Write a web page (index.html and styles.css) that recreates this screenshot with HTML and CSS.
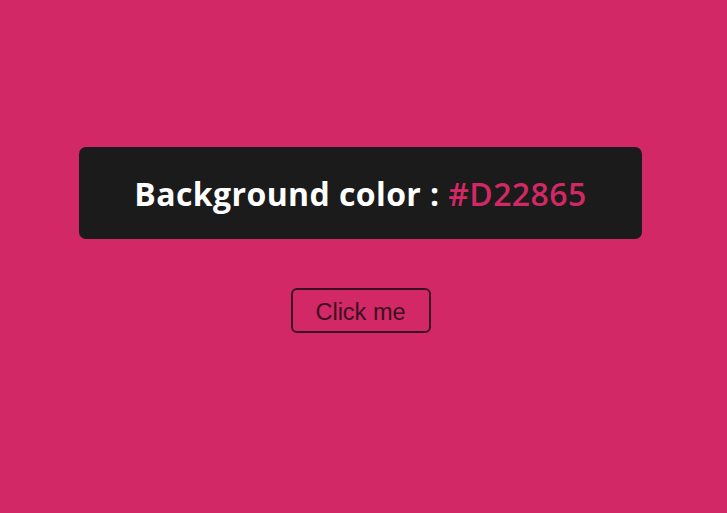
FILE: index.html
```html
<!DOCTYPE html>
<html>
<head>
<meta charset="utf-8">
<link rel="stylesheet" href="styles.css">
</head>
<body>
<main class="page">
  <div class="panel">
    <h1 class="title">Background color : <span class="code">#D22865</span></h1>
  </div>
  <button class="btn">Click me</button>
</main>
</body>
</html>
```
FILE: styles.css
```css
html, body {
  margin: 0;
  padding: 0;
  background: #d22865;
  height: 100%;
}
.page {
  width: 721px;
  padding-top: 147px;
  display: flex;
  flex-direction: column;
  align-items: center;
  gap: 49px;
}
.panel {
  width: 563px;
  height: 92px;
  background: #1b1b1b;
  border-radius: 7px;
  display: flex;
  align-items: center;
  justify-content: center;
}
.title {
  margin: 0;
  font-family: "Open Sans", "Noto Sans", sans-serif;
  font-weight: 700;
  font-size: 32px;
  letter-spacing: 0.4px;
  color: #ffffff;
}
.code {
  color: #d22865;
  font-weight: 600;
}
.btn {
  width: 140px;
  height: 45px;
  background: transparent;
  border: 2px solid #3d0f22;
  border-radius: 6px;
  color: #3a1020;
  font-family: "Liberation Sans", Arial, sans-serif;
  font-size: 23.5px;
  padding: 3px 0 0 0;
}
```
